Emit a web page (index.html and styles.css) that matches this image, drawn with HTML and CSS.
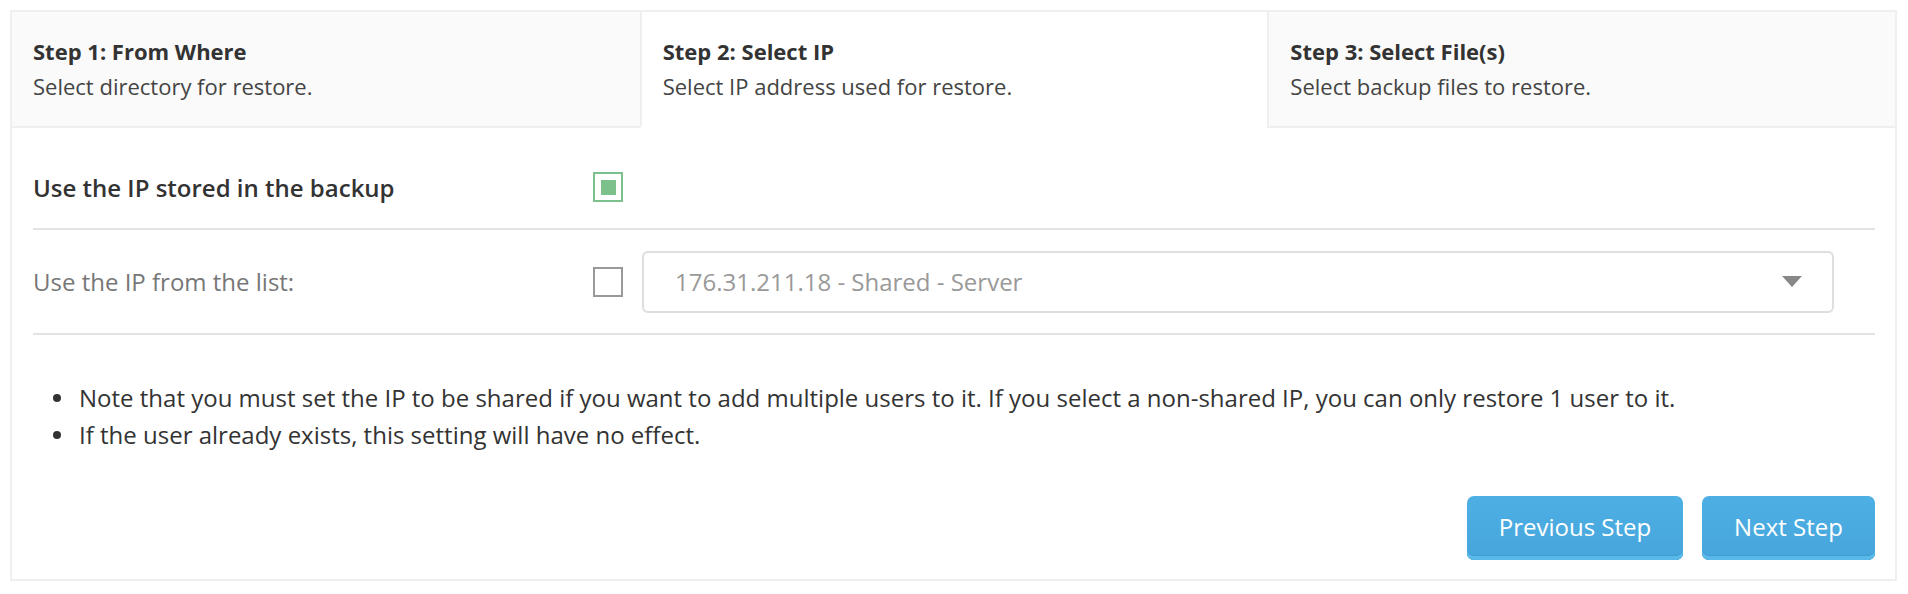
FILE: index.html
```html
<!DOCTYPE html>
<html lang="en">
<head>
    <meta charset="UTF-8">
    <meta name="viewport" content="width=device-width, initial-scale=1.0">
    <title>Restore Backup - Select IP</title>
    <link rel="stylesheet" href="styles.css">
</head>
<body>
    <div class="wizard">
        <div class="steps">
            <div class="step">
                <div class="step-title">Step 1: From Where</div>
                <div class="step-desc">Select directory for restore.</div>
            </div>
            <div class="step active">
                <div class="step-title">Step 2: Select IP</div>
                <div class="step-desc">Select IP address used for restore.</div>
            </div>
            <div class="step">
                <div class="step-title">Step 3: Select File(s)</div>
                <div class="step-desc">Select backup files to restore.</div>
            </div>
        </div>

        <div class="content">
            <div class="row first">
                <div class="label strong">Use the IP stored in the backup</div>
                <span class="check checked"></span>
            </div>
            <div class="row second">
                <div class="label">Use the IP from the list:</div>
                <span class="check"></span>
                <div class="select">
                    <span>176.31.211.18 - Shared - Server</span>
                    <span class="arrow"></span>
                </div>
            </div>

            <ul class="notes">
                <li>Note that you must set the IP to be shared if you want to add multiple users to it. If you select a non-shared IP, you can only restore 1 user to it.</li>
                <li>If the user already exists, this setting will have no effect.</li>
            </ul>

            <div class="actions">
                <button class="btn prev">Previous Step</button>
                <button class="btn next">Next Step</button>
            </div>
        </div>
    </div>
</body>
</html>
```

FILE: styles.css
```css
* {
    margin: 0;
    padding: 0;
    box-sizing: border-box;
}

body {
    font-family: 'Open Sans', 'Noto Sans', sans-serif;
    background: #fff;
    color: #333;
    padding: 10px 11px 12px 10px;
}

.wizard {
    border: 2px solid #efefef;
    background: #fff;
}

.steps {
    display: grid;
    grid-template-columns: repeat(3, 1fr);
}

.step {
    background: #fafafa;
    border-bottom: 2px solid #efefef;
    padding: 25px 22px 0 21px;
    height: 116px;
}

.step + .step {
    border-left: 2px solid #efefef;
}

.step.active {
    background: #fff;
    border-bottom-color: transparent;
}

.step-title {
    font-size: 22px;
    font-weight: 700;
    line-height: 28px;
    color: #333;
}

.step-desc {
    font-size: 22px;
    line-height: 28px;
    margin-top: 7px;
    color: #444;
}

.content {
    padding: 0 20px 19px 21px;
}

.row {
    display: flex;
    align-items: center;
    border-bottom: 2px solid #e3e3e3;
}

.row.first {
    height: 102px;
    padding-top: 18px;
}

.row.second {
    height: 105px;
    padding-right: 41px;
}

.label {
    width: 560px;
    font-size: 24px;
    color: #777;
}

.label.strong {
    color: #333;
    font-weight: 600;
}

.check {
    width: 30px;
    height: 30px;
    border: 2px solid #999;
    background: #fff;
    display: flex;
    align-items: center;
    justify-content: center;
    flex-shrink: 0;
}

.check.checked {
    border-color: #7cc08b;
}

.check.checked::after {
    content: '';
    width: 15px;
    height: 15px;
    background: #7cc08b;
}

.select {
    flex: 1;
    margin-left: 19px;
    height: 62px;
    border: 2px solid #dedede;
    border-radius: 6px;
    display: flex;
    align-items: center;
    justify-content: space-between;
    padding: 0 30px 0 31px;
    font-size: 24px;
    color: #999;
}

.arrow {
    width: 0;
    height: 0;
    border-left: 10px solid transparent;
    border-right: 10px solid transparent;
    border-top: 11px solid #888;
}

.notes {
    list-style: none;
    margin-top: 44px;
}

.notes li {
    position: relative;
    padding-left: 46px;
    font-size: 24px;
    line-height: 37px;
    color: #333;
}

.notes li::before {
    content: '';
    position: absolute;
    left: 20px;
    top: 15px;
    width: 8px;
    height: 8px;
    border-radius: 50%;
    background: #333;
}

.actions {
    display: flex;
    justify-content: flex-end;
    gap: 19px;
    margin-top: 43px;
}

.btn {
    font-family: 'Open Sans', sans-serif;
    font-size: 24px;
    color: #fff;
    height: 64px;
    border: none;
    border-radius: 7px;
    background: linear-gradient(#4eafe4, #46a6dc);
    box-shadow: inset 0 -4px 0 #5bb9ea, inset 0 -5px 0 #3f9dd3;
    cursor: pointer;
    padding-bottom: 4px;
}

.btn.prev {
    width: 216px;
}

.btn.next {
    width: 173px;
}

.btn:hover {
    background: linear-gradient(#45a5da, #3e9cd2);
}
```
